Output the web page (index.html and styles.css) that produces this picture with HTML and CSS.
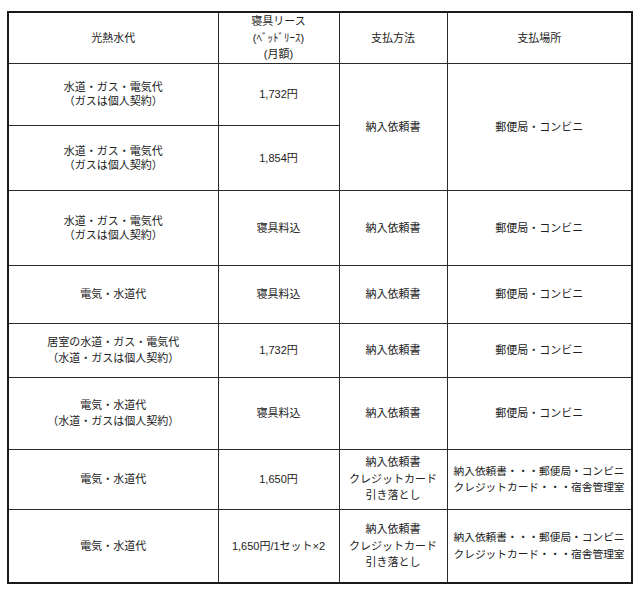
FILE: index.html
```html
<!DOCTYPE html>
<html lang="ja">
<head>
<meta charset="utf-8">
<title>光熱水代</title>
<link rel="stylesheet" href="styles.css">
</head>
<body>
<table class="fees">
  <colgroup>
    <col class="c1"><col class="c2"><col class="c3"><col class="c4">
  </colgroup>
  <tr class="r-head">
    <th>光熱水代</th>
    <th class="loose">寝具リース<br>(ﾍﾞｯﾄﾞﾘｰｽ)<br>(月額)</th>
    <th>支払方法</th>
    <th class="dot">支払場所</th>
  </tr>
  <tr class="r1">
    <td>水道・ガス・電気代<br>（ガスは個人契約）</td>
    <td class="num">1,732円</td>
    <td rowspan="2">納入依頼書</td>
    <td rowspan="2" class="dot">郵便局・コンビニ</td>
  </tr>
  <tr class="r2">
    <td>水道・ガス・電気代<br>（ガスは個人契約）</td>
    <td class="num">1,854円</td>
  </tr>
  <tr class="r3">
    <td>水道・ガス・電気代<br>（ガスは個人契約）</td>
    <td>寝具料込</td>
    <td>納入依頼書</td>
    <td class="dot">郵便局・コンビニ</td>
  </tr>
  <tr class="r4">
    <td>電気・水道代</td>
    <td>寝具料込</td>
    <td>納入依頼書</td>
    <td class="dot">郵便局・コンビニ</td>
  </tr>
  <tr class="r5">
    <td class="loose">居室の水道・ガス・電気代<br>（水道・ガスは個人契約）</td>
    <td class="num">1,732円</td>
    <td>納入依頼書</td>
    <td class="dot">郵便局・コンビニ</td>
  </tr>
  <tr class="r6">
    <td class="loose">電気・水道代<br>（水道・ガスは個人契約）</td>
    <td>寝具料込</td>
    <td>納入依頼書</td>
    <td class="dot">郵便局・コンビニ</td>
  </tr>
  <tr class="r7">
    <td>電気・水道代</td>
    <td class="num">1,650円</td>
    <td class="loose">納入依頼書<br>クレジットカード<br>引き落とし</td>
    <td class="dot loose left">納入依頼書・・・郵便局・コンビニ<br>クレジットカード・・・宿舎管理室</td>
  </tr>
  <tr class="r8">
    <td>電気・水道代</td>
    <td class="num">1,650円/1セット×2</td>
    <td class="loose">納入依頼書<br>クレジットカード<br>引き落とし</td>
    <td class="dot loose left">納入依頼書・・・郵便局・コンビニ<br>クレジットカード・・・宿舎管理室</td>
  </tr>
</table>
</body>
</html>
```
FILE: styles.css
```css
html, body {
  margin: 0;
  padding: 0;
  background: #ffffff;
}

body {
  padding: 11px 0 0 7px;
  font-family: "Liberation Sans", "Noto Sans CJK JP", sans-serif;
  font-size: 11px;
  color: #222222;
}

.fees {
  border-collapse: collapse;
  table-layout: fixed;
  width: 626px;
  border: 2px solid #1a1a1a;
}

.c1 { width: 210px; }
.c2 { width: 121px; }
.c3 { width: 108px; }
.c4 { width: 185px; }

.fees th,
.fees td {
  border: 1px solid #2a2a2a;
  padding: 0 4px;
  text-align: center;
  vertical-align: middle;
  font-weight: normal;
  line-height: 14px;
  white-space: nowrap;
}

.fees .dot {
  border-left: 1px dotted #777777;
}

.fees .loose {
  line-height: 16.5px;
}

.fees .left {
  text-align: left;
  padding-left: 6px;
  padding-right: 2px;
  font-size: 10.7px;
}

.num {
  font-family: "Liberation Sans", "Noto Sans CJK JP", sans-serif;
}

.r-head { height: 51px; }
.r1 { height: 62px; }
.r2 { height: 65px; }
.r3 { height: 75px; }
.r4 { height: 58px; }
.r5 { height: 54px; }
.r6 { height: 72px; }
.r7 { height: 60px; }
.r8 { height: 74px; }
```
